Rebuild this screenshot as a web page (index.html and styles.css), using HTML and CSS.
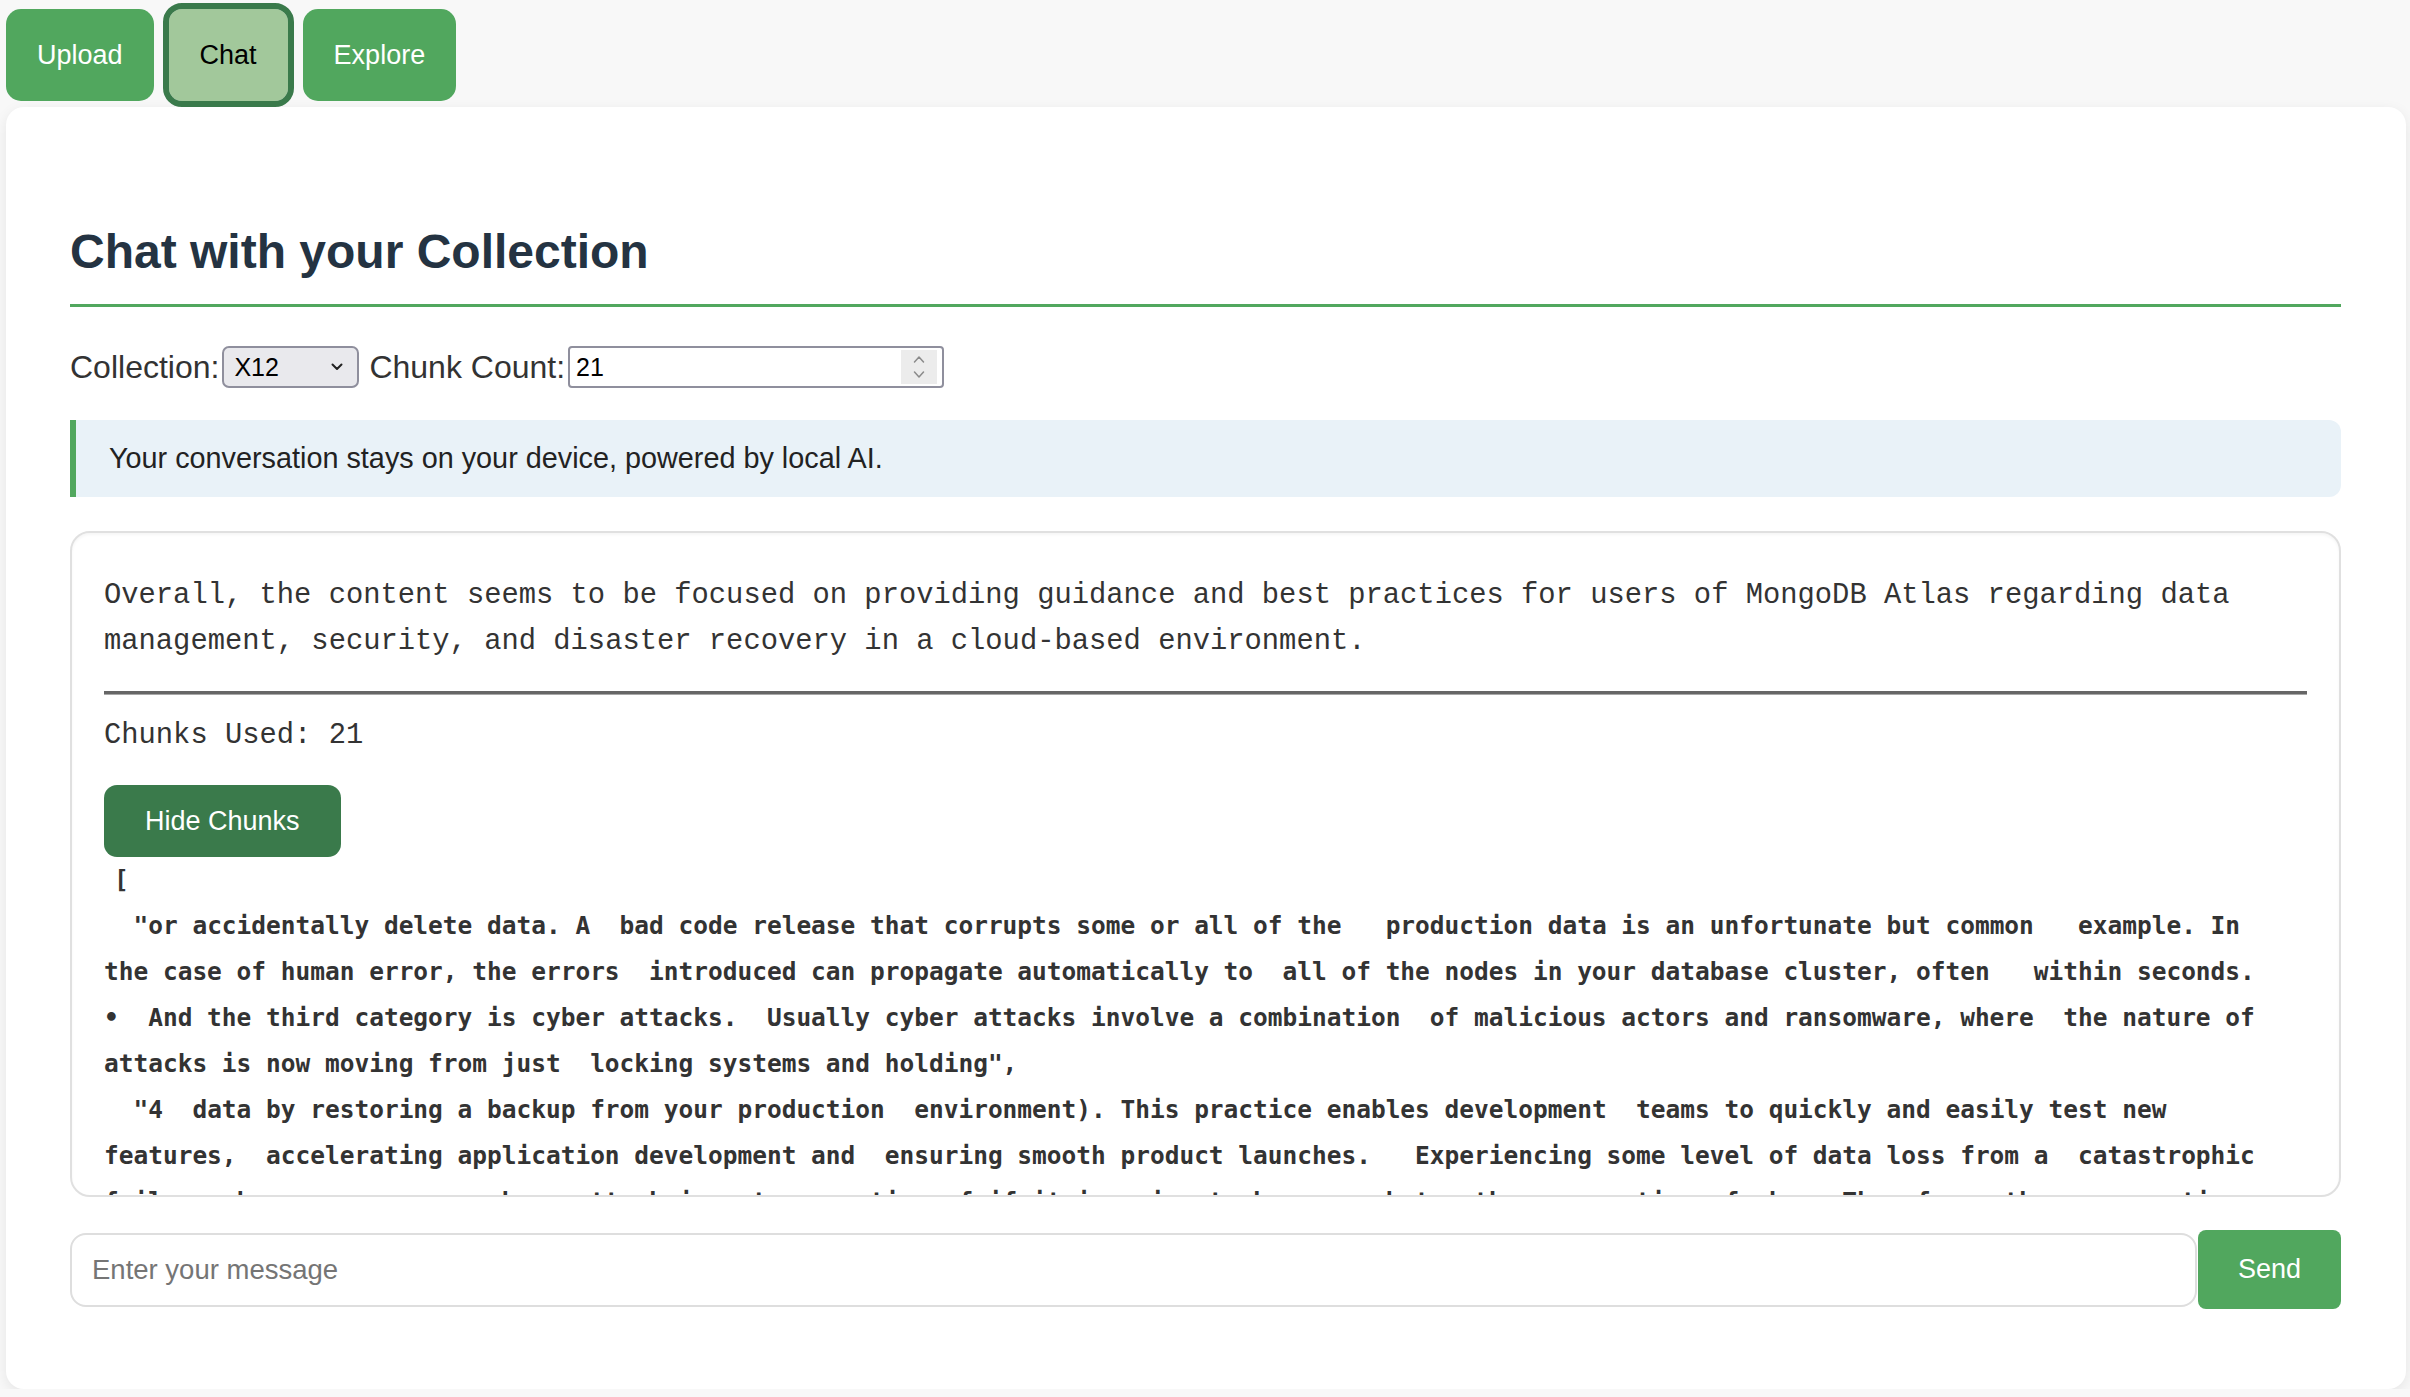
FILE: index.html
```
<!DOCTYPE html>
<html lang="en">
<head>
<meta charset="utf-8">
<title>Chat with your Collection</title>
<link rel="stylesheet" href="styles.css">
</head>
<body>
<nav class="tabs">
  <button class="tab">Upload</button>
  <button class="tab tab-active">Chat</button>
  <button class="tab">Explore</button>
</nav>
<main class="card">
  <h2 class="title">Chat with your Collection</h2>
  <div class="controls">
    <label class="ctl-label">Collection:</label>
    <div class="select-wrap">
      <select class="select"><option>X12</option></select>
      <svg class="select-chev" width="12" height="8" viewBox="0 0 12 8"><path d="M1.5 1.5 L6 6 L10.5 1.5" fill="none" stroke="#222" stroke-width="2" stroke-linecap="round" stroke-linejoin="round"/></svg>
    </div>
    <label class="ctl-label ctl-gap">Chunk Count:</label>
    <div class="number-wrap">
      <input class="number" type="number" value="21">
      <span class="spin">
        <svg width="14" height="30" viewBox="0 0 14 30"><path d="M2.5 10 L7 5 L11.5 10" fill="none" stroke="#8a8a8a" stroke-width="1.5" stroke-linecap="round" stroke-linejoin="round"/><path d="M2.5 20 L7 25 L11.5 20" fill="none" stroke="#8a8a8a" stroke-width="1.5" stroke-linecap="round" stroke-linejoin="round"/></svg>
      </span>
    </div>
  </div>
  <div class="notice">Your conversation stays on your device, powered by local AI.</div>
  <section class="response">
    <p class="answer">Overall, the content seems to be focused on providing guidance and best practices for users of MongoDB Atlas regarding data management, security, and disaster recovery in a cloud-based environment.</p>
    <hr class="divider">
    <p class="answer">Chunks Used: 21</p>
    <button class="hide-btn">Hide Chunks</button>
    <pre class="chunks"><span class="bracket">[</span>
  "or accidentally delete data. A  bad code release that corrupts some or all of the   production data is an unfortunate but common   example. In the case of human error, the errors  introduced can propagate automatically to  all of the nodes in your database cluster, often   within seconds. •  And the third category is cyber attacks.  Usually cyber attacks involve a combination  of malicious actors and ransomware, where  the nature of attacks is now moving from just  locking systems and holding",
  "4  data by restoring a backup from your production  environment). This practice enables development  teams to quickly and easily test new features,  accelerating application development and  ensuring smooth product launches.   Experiencing some level of data loss from a  catastrophic failure, human error, or cyber  attack is not a question of if it is going to happen,  but rather a question of when. Therefore, the  preparation and planning for data recovery is a critical part of any database strategy.",
  "backups should be stored in a separate location from the production cluster,  ideally in a different region, so that a single failure cannot affect both copies of the data."
]</pre>
  </section>
  <div class="composer">
    <input class="message" type="text" placeholder="Enter your message">
    <button class="send">Send</button>
  </div>
</main>
</body>
</html>
```
FILE: styles.css
```
* { box-sizing: border-box; }

body {
  margin: 0;
  background: #f8f8f8;
  font-family: "Liberation Sans", Arial, sans-serif;
  color: #333;
}

.tabs {
  display: flex;
  gap: 15px;
  padding: 9px 0 0 6px;
  height: 107px;
  align-items: flex-start;
}

.tab {
  height: 92px;
  padding: 0 31px;
  border: none;
  border-radius: 15px;
  background: #51a75e;
  color: #fff;
  font-family: "Liberation Sans", Arial, sans-serif;
  font-size: 27px;
}

.tab-active {
  background: #a2c89b;
  color: #000;
  outline: 6px solid #3a7a4b;
  border-radius: 13px;
}

.card {
  margin: 0 4px 0 6px;
  background: #fff;
  border-radius: 18px;
  padding: 64px 65px 80px 64px;
  box-shadow: 0 4px 14px rgba(0, 0, 0, 0.08);
}

.title {
  margin: 53px 0 0;
  padding-bottom: 25px;
  border-bottom: 3px solid #51a75e;
  font-size: 48px;
  line-height: 55px;
  font-weight: bold;
  color: #243342;
}

.controls {
  display: flex;
  align-items: center;
  height: 42px;
  margin-top: 39px;
}

.ctl-label {
  font-size: 32px;
  color: #333;
  margin-right: 3px;
}

.ctl-gap { margin-left: 10px; }

.select-wrap {
  position: relative;
  width: 137px;
  height: 42px;
}

.select {
  appearance: none;
  -webkit-appearance: none;
  width: 100%;
  height: 100%;
  border: 2px solid #8f8f9d;
  border-radius: 7px;
  background: #e9e9ed;
  padding: 0 0 0 10px;
  font-family: "Liberation Sans", Arial, sans-serif;
  font-size: 25px;
  color: #000;
}

.select-chev {
  position: absolute;
  right: 16px;
  top: 17px;
}

.number-wrap {
  display: flex;
  align-items: center;
  width: 376px;
  height: 42px;
  border: 2px solid #8f8f9d;
  border-radius: 4px;
  background: #fff;
  padding: 0 5px 0 6px;
}

.number {
  flex: 1;
  min-width: 0;
  border: none;
  outline: none;
  padding: 0;
  font-family: "Liberation Sans", Arial, sans-serif;
  font-size: 25px;
  color: #000;
  -moz-appearance: textfield;
}

.number::-webkit-inner-spin-button,
.number::-webkit-outer-spin-button {
  -webkit-appearance: none;
  margin: 0;
}

.spin {
  display: flex;
  align-items: center;
  justify-content: center;
  width: 36px;
  height: 34px;
  background: #ececec;
}

.notice {
  margin-top: 32px;
  background: #e9f2f8;
  border-left: 6px solid #51a75e;
  border-radius: 0 12px 12px 0;
  padding: 22px 33px;
  font-size: 28.8px;
  line-height: 33px;
  color: #222;
}

.response {
  margin-top: 34px;
  height: 666px;
  border: 2px solid #e0e0e0;
  border-radius: 20px;
  padding: 40px 32px 0 32px;
  overflow-y: auto;
  scrollbar-width: none;
  box-shadow: inset 0 2px 3px rgba(0, 0, 0, 0.04);
}

.response::-webkit-scrollbar { width: 0; height: 0; }

.answer {
  margin: 0;
  font-family: "Liberation Mono", "Courier New", monospace;
  font-size: 28.8px;
  line-height: 46px;
  white-space: pre-wrap;
  color: #333;
}

.divider {
  margin: 26px 0 18px;
  height: 0;
  border: none;
  border-top: 3px solid #666;
  border-bottom: 1px solid #a8a8a8;
}

.hide-btn {
  display: block;
  margin-top: 26px;
  height: 72px;
  padding: 0 41px;
  border: none;
  border-radius: 13px;
  background: #3a7a4b;
  color: #fff;
  font-family: "Liberation Sans", Arial, sans-serif;
  font-size: 27px;
}

.chunks {
  margin: 0 31px 0 0;
  font-family: "DejaVu Sans Mono", monospace;
  font-weight: bold;
  font-size: 24.48px;
  line-height: 46px;
  white-space: pre-wrap;
  color: #333;
}

.bracket { margin-left: 10px; }

.composer {
  display: flex;
  align-items: center;
  margin-top: 33px;
}

.message {
  flex: 1;
  min-width: 0;
  height: 74px;
  border: 2px solid #dedede;
  border-radius: 16px;
  padding: 0 20px;
  font-family: "Liberation Sans", Arial, sans-serif;
  font-size: 27.5px;
  color: #333;
  outline: none;
}

.message::placeholder { color: #757575; }

.send {
  width: 143px;
  height: 79px;
  margin-left: 1px;
  border: none;
  border-radius: 8px;
  background: #51a75e;
  color: #fff;
  font-family: "Liberation Sans", Arial, sans-serif;
  font-size: 27px;
}
```
